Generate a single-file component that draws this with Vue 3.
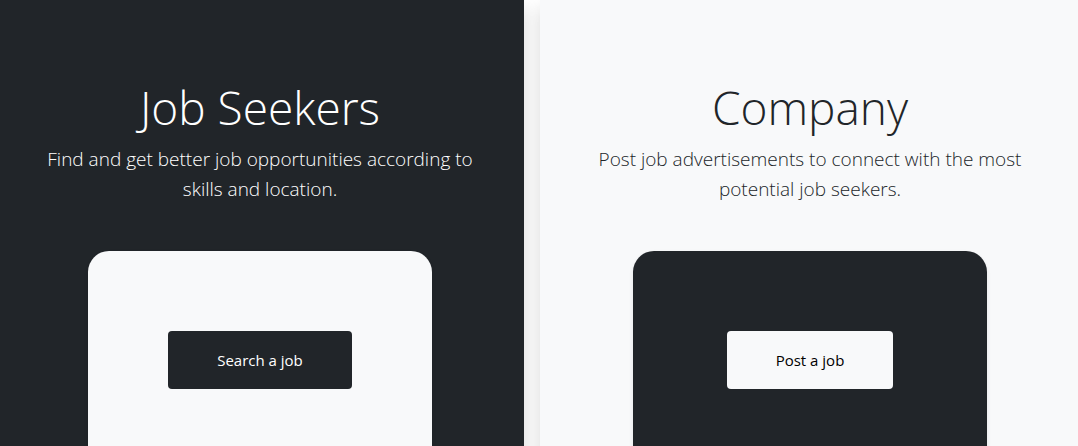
<script setup>
const panels = [
  {
    tone: 'dark',
    title: 'Job Seekers',
    lead: 'Find and get better job opportunities according to skills and location.',
    action: 'Search a job',
  },
  {
    tone: 'light',
    title: 'Company',
    lead: 'Post job advertisements to connect with the most potential job seekers.',
    action: 'Post a job',
  },
]
</script>

<template>
  <main class="page">
    <div class="panels">
      <section v-for="panel in panels" :key="panel.tone" class="panel" :class="panel.tone">
        <h2>{{ panel.title }}</h2>
        <p>{{ panel.lead }}</p>
        <div class="card">
          <button type="button">{{ panel.action }}</button>
        </div>
      </section>
    </div>
  </main>
</template>

<style>
body {
  margin: 0;
  background: #fff;
}
</style>

<style scoped>
.page {
  height: 100vh;
  overflow: hidden;
  font-family: "Segoe UI", "Open Sans", "Noto Sans", sans-serif;
}

.panels {
  display: grid;
  grid-template-columns: 44fr 45fr;
  gap: 16px;
  min-height: 100%;
  margin: 0 -2px 0 -4px;
}

.panel {
  display: flex;
  flex-direction: column;
  align-items: center;
  padding: 80px 49px 0;
  text-align: center;
  box-shadow: 0 8px 16px rgba(0, 0, 0, 0.15);
}

.dark {
  background: #212529;
  color: #fff;
}

.light {
  background: #f8f9fa;
  color: #212529;
}

h2 {
  margin: 0 0 10px;
  font-size: 46px;
  font-weight: 300;
  line-height: 54px;
}

p {
  margin: 0;
  font-size: 19px;
  font-weight: 300;
  line-height: 30px;
}

.card {
  box-sizing: border-box;
  width: 80%;
  height: 300px;
  margin-top: 47px;
  padding-top: 80px;
  border-radius: 21px 21px 0 0;
  box-shadow: 0 2px 4px rgba(0, 0, 0, 0.08);
}

.dark .card,
.light button {
  background: #f8f9fa;
}

.light .card,
.dark button {
  background: #212529;
}

button {
  padding: 17px 49px;
  border: 0;
  border-radius: 4px;
  font-family: inherit;
  font-size: 15px;
  line-height: 24px;
}

.dark button {
  color: #fff;
}

.light button {
  color: #000;
}
</style>
